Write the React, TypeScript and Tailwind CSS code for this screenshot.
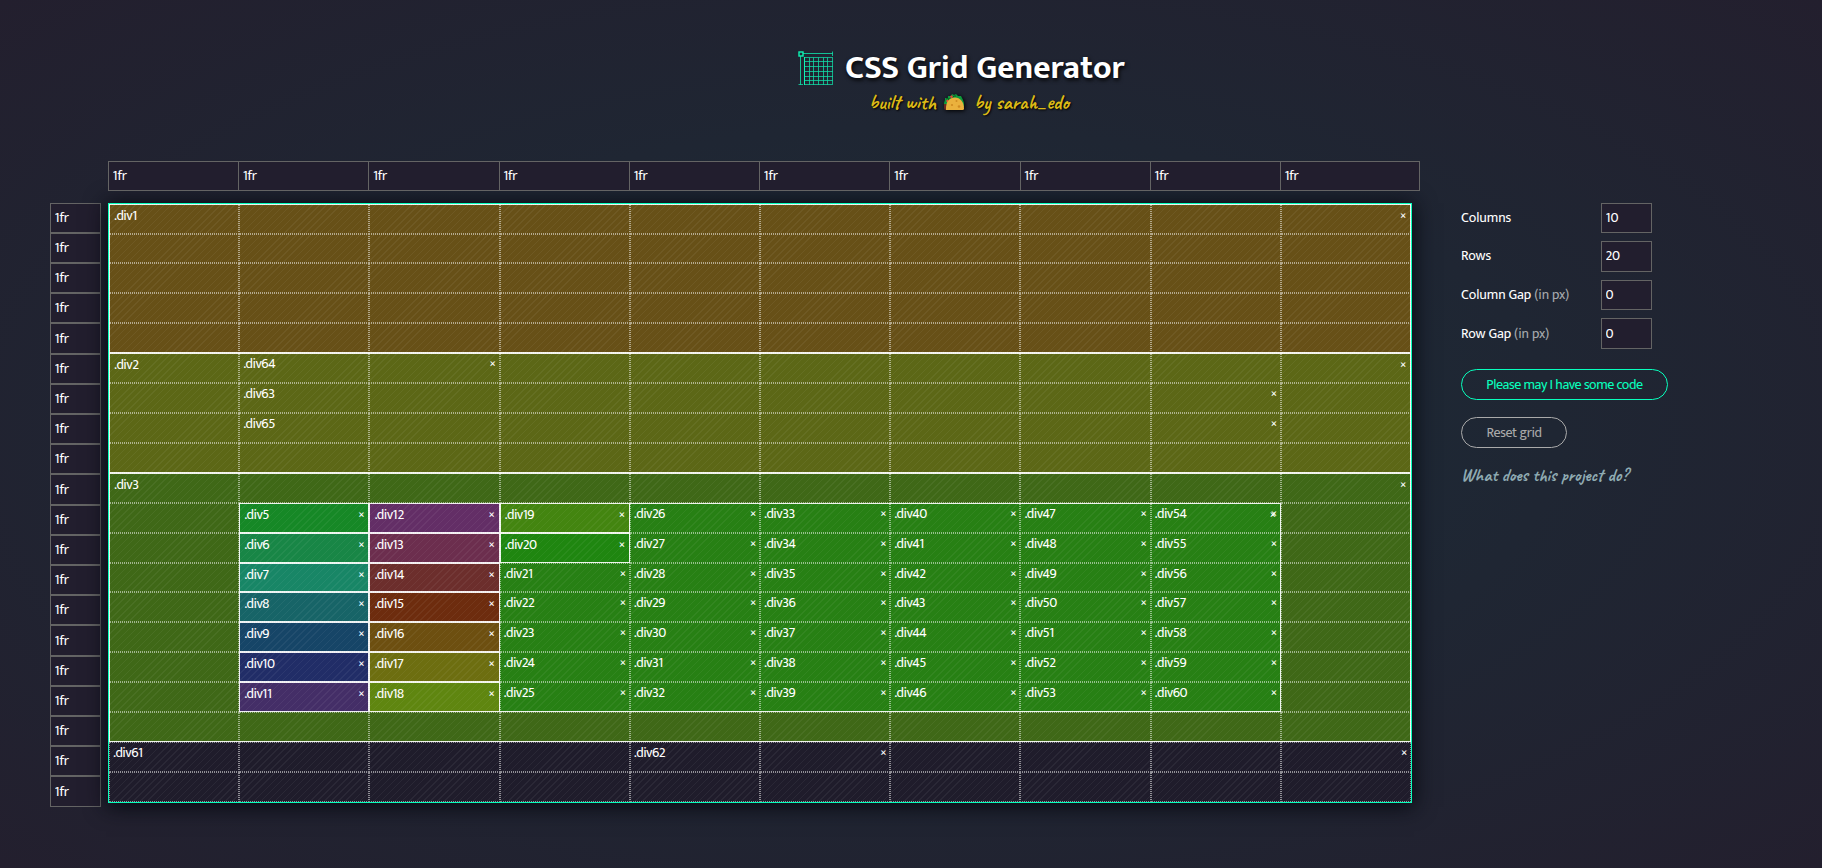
type Area = {
  name: string;
  place: string;
  fill?: string;
};

const filled: Area[] = [
  { name: "", place: "col-[1/11] row-[1/6]", fill: "bg-[#675017]" },
  { name: "", place: "col-[1/11] row-[6/10]", fill: "bg-[#5c6716]" },
  { name: "", place: "col-[1/11] row-[10/19]", fill: "bg-[#3f6817]" },
  { name: "", place: "col-[2/10] row-[11/18]", fill: "bg-[#278014]" },
  { name: "", place: "col-[2/3] row-[11/12]", fill: "bg-[#168826]" },
  { name: "", place: "col-[2/3] row-[12/13]", fill: "bg-[#188646]" },
  { name: "", place: "col-[2/3] row-[13/14]", fill: "bg-[#188666]" },
  { name: "", place: "col-[2/3] row-[14/15]", fill: "bg-[#176467]" },
  { name: "", place: "col-[2/3] row-[15/16]", fill: "bg-[#164567]" },
  { name: "", place: "col-[2/3] row-[16/17]", fill: "bg-[#212d67]" },
  { name: "", place: "col-[2/3] row-[17/18]", fill: "bg-[#442e67]" },
  { name: "", place: "col-[3/4] row-[11/12]", fill: "bg-[#632e66]" },
  { name: "", place: "col-[3/4] row-[12/13]", fill: "bg-[#6c2e4e]" },
  { name: "", place: "col-[3/4] row-[13/14]", fill: "bg-[#6c2e2c]" },
  { name: "", place: "col-[3/4] row-[14/15]", fill: "bg-[#6d2c0e]" },
  { name: "", place: "col-[3/4] row-[15/16]", fill: "bg-[#6d4f10]" },
  { name: "", place: "col-[3/4] row-[16/17]", fill: "bg-[#6d6e10]" },
  { name: "", place: "col-[3/4] row-[17/18]", fill: "bg-[#5f8610]" },
  { name: "", place: "col-[4/5] row-[11/12]", fill: "bg-[#438510]" },
  { name: "", place: "col-[4/5] row-[12/13]", fill: "bg-[#1f8610]" },
].map((a, i) => ({ ...a, name: `.div${i + 1}` }));

const rowPlace = [
  "row-[11/12]",
  "row-[12/13]",
  "row-[13/14]",
  "row-[14/15]",
  "row-[15/16]",
  "row-[16/17]",
  "row-[17/18]",
];
const colPlace = [
  "col-[4/5]",
  "col-[5/6]",
  "col-[6/7]",
  "col-[7/8]",
  "col-[8/9]",
  "col-[9/10]",
];

const plain: Area[] = [];
for (let n = 21; n <= 60; n++) {
  const k = n - 19;
  plain.push({ name: `.div${n}`, place: `${colPlace[Math.floor(k / 7)]} ${rowPlace[k % 7]}` });
}
plain.push(
  { name: ".div61", place: "col-[1/11] row-[19/21]" },
  { name: ".div62", place: "col-[5/7] row-[19/20]" },
  { name: ".div63", place: "col-[2/10] row-[7/8]" },
  { name: ".div64", place: "col-[2/4] row-[6/7]" },
  { name: ".div65", place: "col-[2/10] row-[8/9]" },
);

const gridTracks = "grid grid-cols-[repeat(10,minmax(0,1fr))] grid-rows-[repeat(20,minmax(0,1fr))]";

function AreaText({ area }: { area: Area }) {
  return (
    <div
      className={`${area.place} flex items-start justify-between px-1 ${
        area.fill ? "border border-transparent" : ""
      }`}
    >
      <span className="text-[14px] leading-[21px] tracking-[-0.55px]">
        {area.name === ".div4" ? "" : area.name}
      </span>
      <span className="text-[14px] leading-[21px] font-medium">×</span>
    </div>
  );
}

function Logo() {
  return (
    <svg
      width="36"
      height="36"
      viewBox="0 0 36 36"
      fill="none"
      stroke="#12dca6"
      className="mt-[2px]"
    >
      <path d="M5 2.5H35M2.5 5V34" opacity="0.85" />
      <path d="M34.5 0.5V5M0.5 33.5H5" opacity="0.8" />
      <rect x="1" y="1" width="4" height="4" stroke="#0df5b4" strokeWidth="1.4" />
      <rect x="6.5" y="6.5" width="28" height="27" opacity="0.75" />
      <path
        d="M11.5 6.5V34M15.5 6.5V34M20.5 6.5V34M25.5 6.5V34M29.5 6.5V34M6.5 10.5H35M6.5 15.5H35M6.5 20.5H35M6.5 25.5H35M6.5 29.5H35"
        opacity="0.78"
      />
      <path d="M6.5 6V34" stroke="#0df5b4" />
    </svg>
  );
}

function Taco() {
  return (
    <svg width="22" height="18" viewBox="0 0 22 18" className="drop-shadow-[1px_1px_2px_#000]">
      <path
        d="M1 14 1 10 2 7 2 5 5 5 5 3 8 3 9 1 11 2 13 1 15 3 18 3 19 5 20 7 21 10V14Z"
        fill="#0d9a3b"
      />
      <path d="M3 6 5 5 6 7 8 4 10 4 11 3 13 3" stroke="#0a5c22" fill="none" />
      <circle cx="8.5" cy="3.8" r="1.3" fill="#e8483c" />
      <circle cx="4.5" cy="8" r="1.2" fill="#e8483c" />
      <path d="M1 11h5v6H3Q1 17 1 15Z" fill="#6b2a22" />
      <path d="M3 17C2.500 8 7 4.500 12 4.500S21 9 21 15.500Q21 17 19.500 17Z" fill="#eab13d" />
      <circle cx="9" cy="12" r="1.1" fill="#cf8b22" />
      <circle cx="13.5" cy="8" r="1" fill="#cf8b22" />
      <circle cx="16" cy="13.5" r="1.3" fill="#cf8b22" />
    </svg>
  );
}

const settings = [
  { label: "Columns", unit: "", value: "10" },
  { label: "Rows", unit: "", value: "20" },
  { label: "Column Gap", unit: "(in px)", value: "0" },
  { label: "Row Gap", unit: "(in px)", value: "0" },
];

const field =
  "border border-[#646464] bg-[#221e2e] pr-1 pl-[3.5px] pb-px text-[14px] tracking-[-0.2px] text-white outline-none rounded-none";

export default function App() {
  return (
    <div className="h-[868px] w-[1822px] overflow-hidden bg-[radial-gradient(ellipse_at_center,#1b2d38_0%,#231f2e_100%)] font-[Mukta,'Open_Sans',sans-serif] text-[14px] text-white">
      <header className="flex h-[160.63px] flex-col pt-[48px]">
        <div className="ml-[798px] flex h-10 items-center gap-[11px]">
          <Logo />
          <h1 className="whitespace-nowrap text-[33.3px] leading-10 font-bold [text-shadow:1px_2px_4px_#000]">
            CSS Grid Generator
          </h1>
        </div>
        <p className="mt-[-2px] ml-[869px] flex h-8 items-center font-[Caveat,cursive] text-[20.6px] font-bold whitespace-nowrap text-[#dcba16] [text-shadow:1px_1px_2px_#000]">
          <span>built with</span>
          <span className="mr-[9px] ml-[7px]">
            <Taco />
          </span>
          <span>by sarah_edo</span>
        </p>
      </header>

      <div className="flex">
        <div className="mt-[42px] ml-[50px] flex h-[604px] w-[51px] flex-col">
          {Array.from({ length: 20 }, (_, i) => (
            <input
              key={i}
              aria-label={`Row ${i + 1}`}
              className={`${field} min-h-0 w-full flex-1`}
              defaultValue="1fr"
            />
          ))}
        </div>

        <main className="ml-[7px] w-[1312px]">
          <div className="relative z-10 mr-[9.8px] grid h-[30px] grid-cols-[repeat(10,minmax(0,1fr))]">
            {Array.from({ length: 10 }, (_, i) => (
              <input
                key={i}
                aria-label={`Column ${i + 1}`}
                className={`${field} h-[30px] w-[139.8px]`}
                defaultValue="1fr"
              />
            ))}
          </div>

          <section className="mt-3 grid h-[600.2px] w-[1304px] border border-[#08ffbd] bg-[#1f1c2b] shadow-[0_2px_20px_2px_#080a12]">
            <div className={`${gridTracks} col-start-1 row-start-1`}>
              {filled.map((a) => (
                <div key={a.name} className={`${a.place} ${a.fill} border border-white/90`} />
              ))}
            </div>
            <div className="col-start-1 row-start-1 bg-[repeating-linear-gradient(135deg,transparent_0px,transparent_4px,rgba(255,255,255,0.05)_4px,rgba(255,255,255,0.05)_5px)]" />
            <div className={`${gridTracks} col-start-1 row-start-1`}>
              {Array.from({ length: 200 }, (_, i) => (
                <div key={i} className="border border-dotted border-white/50" />
              ))}
            </div>
            <div className={`${gridTracks} col-start-1 row-start-1`}>
              {[...filled, ...plain].map((a) => (
                <AreaText key={a.name} area={a} />
              ))}
            </div>
          </section>
        </main>

        <aside className="mt-[42px] ml-[41px] w-[220px]">
          {settings.map((s) => (
            <label key={s.label} className="mb-[8.3px] flex h-[30.3px] items-center">
              <span className="w-[140px] leading-[26px] tracking-[-0.1px]">
                {s.label} {s.unit && <span className="text-[#a5a8ac]">{s.unit}</span>}
              </span>
              <input className={`${field} h-[30.3px] w-[51px]`} defaultValue={s.value} />
            </label>
          ))}
          <button className="mt-[20.5px] block h-[31px] w-[207px] rounded-[15.5px] border border-[#08ffbd] leading-[28px] tracking-[-0.45px] text-[#08ffbd]">
            Please may I have some code
          </button>
          <button className="mt-[17px] block h-[31px] w-[106px] rounded-[15.5px] border border-[#aaaaaa] leading-[26px] tracking-[-0.4px] text-[#aaaaaa]">
            Reset grid
          </button>
          <p className="mt-[13px] font-[Caveat,cursive] text-[18.1px] leading-[28px] font-bold text-[#8fabb2]">
            What does this project do?
          </p>
        </aside>
      </div>
    </div>
  );
}
